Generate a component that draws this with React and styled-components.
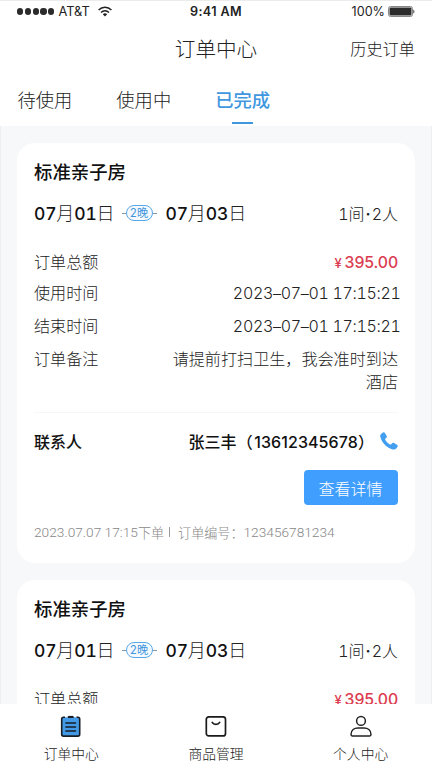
import React from 'react'
import { useState } from 'react';
import styled, { createGlobalStyle } from 'styled-components'


const tabs = ['待使用', '使用中', '已完成'];

const orders = [
  { id: 1, room: '标准亲子房', start: ['07', '01'], end: ['07', '03'], nights: 2, rooms: 1, people: 2,
    price: '395.00', from: '2023–07–01 17:15:21', to: '2023–07–01 17:15:21',
    remark: '请提前打扫卫生，我会准时到达酒店', name: '张三丰', phone: '13612345678',
    created: '2023.07.07 17:15', number: '123456781234' },
  { id: 2, room: '标准亲子房', start: ['07', '01'], end: ['07', '03'], nights: 2, rooms: 1, people: 2,
    price: '395.00', from: '2023–07–01 17:15:21', to: '2023–07–01 17:15:21',
    remark: '请提前打扫卫生，我会准时到达酒店', name: '张三丰', phone: '13612345678',
    created: '2023.07.07 17:15', number: '123456781234' },
];

function WifiIcon() {
  return (
    <svg width="14" height="11" viewBox="0 0 14 11" fill="none" stroke="#222" strokeWidth="1.5">
      <path d="M0.6 4.1C4.2 0.3 9.8 0.3 13.4 4.1" />
      <path d="M3 6.5C5.3 4.2 8.7 4.2 11 6.5" />
      <path d="M7 10.4L4.8 8.2C6 7 8 7 9.2 8.2Z" fill="#222" stroke="none" />
    </svg>
  );
}

function BatteryIcon() {
  return (
    <svg width="27" height="11" viewBox="0 0 27 11">
      <rect x="0.5" y="0.5" width="24" height="10" rx="2" fill="#fff" stroke="#888" />
      <rect x="1.5" y="1.5" width="22" height="8" rx="1" fill="#2b2b2b" />
      <path d="M25.3 3.4C26.8 4 26.8 7 25.3 7.6Z" fill="#444" />
    </svg>
  );
}

function PhoneIcon() {
  return (
    <svg width="18" height="18" viewBox="0 0 18 18" fill="#429eee">
      <path d="M1.1 1.9L3 .5C3.7 0 4.5.2 4.9.9L6.7 3.9C7.1 4.6 6.9 5.3 6.3 5.8L5.5 6.5C5.1 6.9 5.1 7.4 5.4 7.9C6.4 9.7 8 11.3 9.9 12.4C10.4 12.7 10.9 12.6 11.3 12.2L12.1 11.3C12.6 10.7 13.3 10.6 14 11L17 12.7C17.8 13.2 18 14 17.5 14.7L16.3 16.4C15.5 17.4 14.2 17.7 12.9 17.4C7 16 2 10.7.5 5.4C.1 4 .1 2.8 1.1 1.9Z" />
    </svg>
  );
}

function OrderIcon() {
  return (
    <svg width="22" height="24" viewBox="0 0 22 24" fill="none" stroke="#171d25" strokeWidth="1.6">
      <rect x="1.7" y="3.3" width="18" height="18.8" rx="1.8" fill="#4299e6" />
      <path d="M5 3.1H7.6M13.8 3.1H16.4" stroke="#ffffff" strokeWidth="2.2" />
      <path d="M5 4.1H7.6M13.8 4.1H16.4" stroke="#4299e6" strokeWidth="1.6" />
      <path d="M8.2 2.8H13.2" strokeWidth="1.8" />
      <path d="M5.8 9H15.6M5.8 13H15.6M5.8 17H15.6" strokeWidth="1.4" strokeLinecap="round" />
    </svg>
  );
}

function GoodsIcon() {
  return (
    <svg width="22" height="24" viewBox="0 0 22 24" fill="none" stroke="#1a1a1a" strokeWidth="1.7">
      <rect x="1.3" y="2.8" width="19.2" height="19.1" rx="2.5" />
      <path d="M7.2 8.4C8.6 11 13.2 11 14.7 8.4" strokeLinecap="round" />
    </svg>
  );
}

function UserIcon() {
  return (
    <svg width="22" height="24" viewBox="0 0 22 24" fill="none" stroke="#222" strokeWidth="1.5">
      <circle cx="11" cy="6.9" r="4.4" />
      <path d="M1 20.6C1 16.2 4.3 14 8 14H14C17.7 14 21 16.2 21 20.6C21 21.5 20.7 21.9 19.8 21.9H2.2C1.3 21.9 1 21.5 1 20.6Z" />
    </svg>
  );
}

const menus = [
  { label: '订单中心', icon: <OrderIcon /> },
  { label: '商品管理', icon: <GoodsIcon /> },
  { label: '个人中心', icon: <UserIcon /> },
];

function OrderCard({ order }) {
  return (
    <Card>
      <RoomName>{order.room}</RoomName>
      <StayRow>
        <StayDate><b>{order.start[0]}</b>月<b>{order.start[1]}</b>日</StayDate>
        <Nights><NightsPill><span>{order.nights}</span>晚</NightsPill></Nights>
        <StayDate><b>{order.end[0]}</b>月<b>{order.end[1]}</b>日</StayDate>
        <Guests>{order.rooms}间<Dot>·</Dot>{order.people}人</Guests>
      </StayRow>
      <InfoList>
        <InfoRow $height={31}><Label>订单总额</Label><Price><small>¥</small>{order.price}</Price></InfoRow>
        <InfoRow $height={33}><Label>使用时间</Label><Time>{order.from}</Time></InfoRow>
        <InfoRow $height={33}><Label>结束时间</Label><Time>{order.to}</Time></InfoRow>
        <InfoRow $height={46}><Label>订单备注</Label><Remark>{order.remark}</Remark></InfoRow>
      </InfoList>
      <Contact>
        <ContactLabel>联系人</ContactLabel>
        <ContactName>{order.name}（<Phone>{order.phone}</Phone>）</ContactName>
        <PhoneIcon />
      </Contact>
      <DetailButton type="button">查看详情</DetailButton>
      <Footnote><Num>{order.created}</Num>下单<Bar />订单编号：<Num>{order.number}</Num></Footnote>
    </Card>
  );
}

function App() {
  const [tab, setTab] = useState(2);
  const [menu, setMenu] = useState(0);

  return (
    <>
      <GlobalStyle />
      <Screen>
        <StatusBar>
          <Carrier>
            <Signal>{[0, 1, 2, 3, 4].map((n) => <i key={n} />)}</Signal>
            AT&amp;T
            <WifiIcon />
          </Carrier>
          <Clock>9:41 AM</Clock>
          <Battery>100%<BatteryIcon /></Battery>
        </StatusBar>
        <Header>
          <Title>订单中心</Title>
          <History>历史订单</History>
        </Header>
        <TabBar>
          {tabs.map((name, index) => (
            <Tab key={name} $active={tab === index} onClick={() => setTab(index)}>{name}</Tab>
          ))}
        </TabBar>
        <List>
          {orders.map((order) => <OrderCard key={order.id} order={order} />)}
        </List>
        <Menu>
          {menus.map((item, index) => (
            <MenuItem key={item.label} $active={menu === index} onClick={() => setMenu(index)}>
              {item.icon}
              {item.label}
            </MenuItem>
          ))}
        </Menu>
      </Screen>
    </>
  )
}


const GlobalStyle = createGlobalStyle`
  * {
    box-sizing: border-box;
  }
  body {
    margin: 0;
    overflow: hidden;
    font-family: Inter, 'Noto Sans CJK SC', sans-serif;
    font-variant-numeric: tabular-nums;
  }
`

const Screen = styled.div`
  display: flex;
  flex-direction: column;
  height: 100vh;
  overflow: hidden;
  border-top: 1px solid #ececec;
  background-color: #ffffff;
  color: #222222;
  font-weight: 300;
`;

const StatusBar = styled.div`
  display: grid;
  grid-template-columns: 1fr auto 1fr;
  align-items: center;
  height: 21px;
  flex: none;
  padding: 0 17px;
  font-size: 12px;
  font-weight: 400;
`;

const Carrier = styled.div`
  display: flex;
  align-items: center;
  font-size: 12.8px;

  svg {
    margin-left: 8px;
  }
`;

const Signal = styled.span`
  display: flex;
  gap: 1.5px;
  margin-right: 4px;

  i {
    width: 6.3px;
    height: 6.3px;
    border-radius: 50%;
    background-color: #2b2b2b;
  }
`;

const Clock = styled.div`
  font-weight: 600;
  font-variant-numeric: normal;
  font-size: 12.6px;
  letter-spacing: 0.4px;
`;

const Battery = styled.div`
  display: flex;
  align-items: center;
  justify-content: flex-end;
  gap: 3px;
  font-size: 12.6px;
  font-variant-numeric: normal;
`;

const Header = styled.div`
  display: grid;
  grid-template-columns: 1fr auto 1fr;
  align-items: center;
  height: 51px;
  flex: none;
  padding: 0 17px;
`;

const Title = styled.div`
  grid-column: 2;
  font-size: 20.6px;
`;

const History = styled.div`
  justify-self: end;
  font-size: 16.2px;
`;

const TabBar = styled.div`
  display: flex;
  gap: 44px;
  height: 51px;
  flex: none;
  margin-top: 2px;
  padding: 0 17.5px;
`;

const Tab = styled.div`
  display: flex;
  flex-direction: column;
  align-items: center;
  justify-content: space-between;
  height: 49px;
  line-height: 50px;
  font-size: 18.3px;
  font-weight: ${props => (props.$active ? 500 : 300)};
  color: ${props => (props.$active ? '#4097e0' : '#222222')};
  cursor: pointer;

  &::after {
    content: '';
    flex: none;
    width: 21px;
    height: 2px;
    margin-top: -3px;
    background-color: ${props => (props.$active ? '#4097e0' : 'transparent')};
  }
`;

const List = styled.div`
  display: flex;
  flex-direction: column;
  gap: 17px;
  flex: 1;
  min-height: 0;
  overflow: hidden;
  padding: 17px 16px 0;
  border-left: 1px solid #eeeff1;
  border-right: 1px solid #eeeff1;
  background-color: #f6f8fa;
`;

const Card = styled.div`
  display: flex;
  flex-direction: column;
  flex: none;
  height: 420px;
  padding: 16px 17px 0;
  border-radius: 18px;
  background-color: #ffffff;
`;

const RoomName = styled.div`
  height: 26px;
  line-height: 26px;
  font-size: 18.4px;
  font-weight: 500;
  color: #111111;
`;

const StayRow = styled.div`
  display: flex;
  align-items: center;
  height: 28px;
  margin-top: 14px;
`;

const StayDate = styled.span`
  padding-top: 1px;
  font-size: 18px;
  line-height: 28px;

  b {
    font-weight: 500;
    font-size: 17.5px;
    letter-spacing: -0.2px;
    color: #111111;
  }
`;

const Nights = styled.span`
  display: flex;
  align-items: center;
  margin: 0 9px 0 7px;

  &::before,
  &::after {
    content: '';
    width: 4px;
    height: 1px;
    background-color: #8399aa;
  }
`;

const NightsPill = styled.span`
  display: flex;
  align-items: center;
  justify-content: center;
  width: 27px;
  height: 16px;
  border: 1px solid #5aa7e5;
  border-radius: 8px;
  background-color: #f4faff;
  font-size: 11.2px;
  line-height: 14px;
  font-weight: 400;
  color: #3f94dc;
`;

const Guests = styled.span`
  margin-left: auto;
  font-size: 16px;
`;

const Dot = styled.span`
  margin: 0 1px;
  font-weight: 600;
`;

const InfoList = styled.div`
  display: flex;
  flex-direction: column;
  height: 162px;
  flex: none;
  margin-top: 24px;
  border-bottom: 1px solid #f7f7f7;
`;

const InfoRow = styled.div`
  display: flex;
  justify-content: space-between;
  height: ${props => props.$height}px;
  flex: none;
  line-height: 23px;
  font-size: 16.1px;
`;

const Label = styled.span`
  white-space: nowrap;
`;

const Price = styled.span`
  font-weight: 500;
  font-size: 15.8px;
  font-variant-numeric: normal;
  letter-spacing: -0.1px;
  color: #dc3c50;

  small {
    margin-right: 3px;
    font-size: 13px;
  }
`;

const Time = styled.span`
  margin-right: -2.6px;
  font-size: 16px;
  letter-spacing: -0.32px;
`;

const Remark = styled.span`
  width: 230px;
  text-align: right;
`;

const Contact = styled.div`
  display: flex;
  align-items: center;
  height: 24px;
  flex: none;
  margin-top: 16px;
  font-size: 16px;
  font-weight: 500;
  color: #111111;
`;

const ContactLabel = styled.span`
  margin-right: auto;
`;

const ContactName = styled.span`
  margin-right: 6px;
`;

const Phone = styled.span`
  margin-left: 1.5px;
  font-size: 16px;
  font-weight: 450;
  font-variant-numeric: normal;
  letter-spacing: 0.1px;
`;

const DetailButton = styled.button`
  align-self: flex-end;
  width: 94px;
  height: 35px;
  flex: none;
  margin: 17px 0.5px 0 0;
  padding: 0;
  border: 0;
  border-radius: 4px;
  background-color: #409eff;
  font-family: inherit;
  font-size: 16px;
  font-weight: 300;
  color: #ffffff;
`;

const Footnote = styled.div`
  display: flex;
  align-items: center;
  height: 20px;
  margin-top: 17px;
  font-size: 13.1px;
  color: #888888;
  white-space: nowrap;
`;

const Num = styled.span`
  font-family: Roboto, sans-serif;
  font-size: 13.7px;
`;

const Bar = styled.i`
  width: 1px;
  height: 10px;
  margin: 0 8px 0 5px;
  background-color: #999999;
`;

const Menu = styled.div`
  display: grid;
  grid-template-columns: repeat(3, 1fr);
  height: 64px;
  flex: none;
  margin: 0 -1px;
  padding: 10px 0 0;
  background-color: #ffffff;
`;

const MenuItem = styled.div`
  display: flex;
  flex-direction: column;
  align-items: center;
  gap: 6px;
  line-height: 20px;
  font-size: 13.8px;
  font-weight: 300;
  cursor: pointer;
`;


export default App;
